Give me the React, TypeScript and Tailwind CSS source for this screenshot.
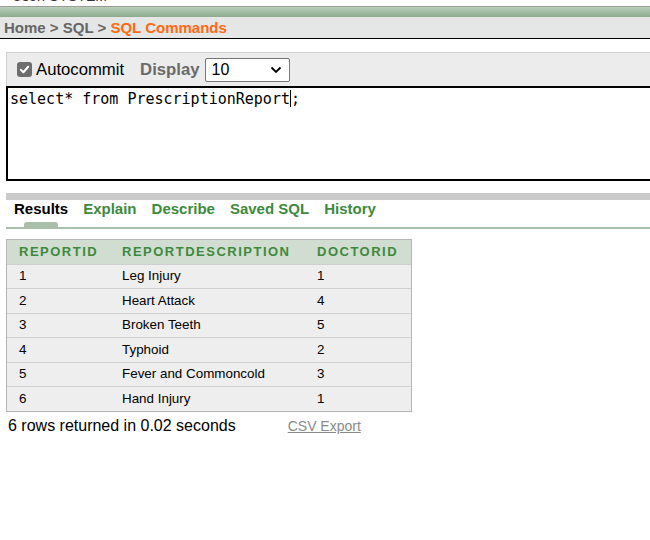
import React from "react";

const rows = [
  { id: "1", desc: "Leg Injury", doc: "1" },
  { id: "2", desc: "Heart Attack", doc: "4" },
  { id: "3", desc: "Broken Teeth", doc: "5" },
  { id: "4", desc: "Typhoid", doc: "2" },
  { id: "5", desc: "Fever and Commoncold", doc: "3" },
  { id: "6", desc: "Hand Injury", doc: "1" },
];

const tabs = ["Results", "Explain", "Describe", "Saved SQL", "History"];

const App = () => {
  return (
    <div className="w-[650px] h-[540px] overflow-hidden bg-white font-['Liberation_Sans',Arial,sans-serif] text-black">
      {/* user line, mostly scrolled off */}
      <div className="h-[6px] overflow-hidden relative">
        <div className="absolute left-[12px] top-[-12px] text-[14px] leading-[16px] text-[#333]">User: SYSTEM</div>
      </div>
      <div className="h-[1px] bg-[#9a9a9a]" />
      <div className="h-[10px] bg-gradient-to-b from-[#b8cfb8] to-[#8eaa8e]" />
      <div className="h-[21px] bg-[#e5e7e6] flex items-center pl-[4px] pt-[1px] text-[15px] font-bold">
        <span className="text-[#666]">Home &gt; SQL &gt;&nbsp;</span>
        <span className="text-[#ff6a13]">SQL Commands</span>
      </div>
      <div className="h-[1px] bg-black" />

      <div className="ml-[6px] mt-[13px] w-[660px]">
        <div className="h-[34px] bg-[#ececec] border-t border-l border-[#d0d0d0] flex items-center pl-[10px] text-[16.7px]">
          <span className="w-[15px] h-[15px] rounded-[3px] bg-[#6e6e6e] flex items-center justify-center">
            <svg width="11" height="11" viewBox="0 0 12 12">
              <path d="M2 6.3 L4.8 9 L10 3" stroke="white" strokeWidth="2.2" fill="none" strokeLinecap="round" strokeLinejoin="round" />
            </svg>
          </span>
          <span className="ml-[4px]">Autocommit</span>
          <span className="ml-[16px] font-bold text-[#6a6a6a]">Display</span>
          <div className="ml-[6px] w-[85px] h-[24px] border border-[#767676] rounded-[2px] bg-white flex items-center justify-between pl-[5px] pr-[7px] text-[16px]">
            <span>10</span>
            <svg width="12" height="8" viewBox="0 0 12 8">
              <path d="M1.5 1.5 L6 6 L10.5 1.5" stroke="black" strokeWidth="1.8" fill="none" />
            </svg>
          </div>
        </div>
        <div className="h-[95px] border-2 border-black bg-white pl-[2px] pt-[1px] font-['DejaVu_Sans_Mono',monospace] text-[15px] leading-[20px]">
          select* from PrescriptionReport<span className="inline-block w-[1px] h-[17px] bg-black align-[-3px]" />;
        </div>

        <div className="mt-[12px] h-[7px] bg-[#cacaca]" />
        <div className="flex items-end h-[27px] pl-[8px] text-[15px] font-bold gap-[15px]">
          {tabs.map((t, i) => (
            <div key={t} className="relative h-full flex items-start">
              <span className={"-mt-[2px] " + (i === 0 ? "text-black" : "text-[#3d8a3d]")}>{t}</span>
              {i === 0 && (
                <div className="absolute left-[10px] bottom-0 w-[34px] h-[5px] rounded-t-[3px] bg-[#a9bfa9]" />
              )}
            </div>
          ))}
        </div>
        <div className="h-[2px] bg-[#a9bfa9]" />
      </div>

      <div className="ml-[6px] mt-[10px] w-[406px] border border-[#b5b5b5]">
        <table className="w-full border-collapse">
          <thead>
            <tr className="bg-[#d1ddd1] h-[24px]">
              <th className="text-left pl-[12px] w-[103px] text-[13px] tracking-[1.5px] text-[#3d8a3d] font-bold">REPORTID</th>
              <th className="text-left pl-[12px] w-[195px] text-[13px] tracking-[1.5px] text-[#3d8a3d] font-bold">REPORTDESCRIPTION</th>
              <th className="text-left pl-[12px] text-[13px] tracking-[1.5px] text-[#3d8a3d] font-bold">DOCTORID</th>
            </tr>
          </thead>
          <tbody>
            {rows.map((r) => (
              <tr key={r.id} className="bg-[#eeeeee] h-[24.5px] border-t border-[#cfcfcf] text-[13.4px]">
                <td className="pl-[12px]">{r.id}</td>
                <td className="pl-[12px]">{r.desc}</td>
                <td className="pl-[12px]">{r.doc}</td>
              </tr>
            ))}
          </tbody>
        </table>
      </div>
      <div className="flex items-center pl-[8px] mt-[2px]">
        <span className="text-[16px]">6 rows returned in 0.02 seconds</span>
        <span className="ml-[52px] text-[14px] text-[#8a8a8a] underline">CSV Export</span>
      </div>
    </div>
  );
};

export default App;
